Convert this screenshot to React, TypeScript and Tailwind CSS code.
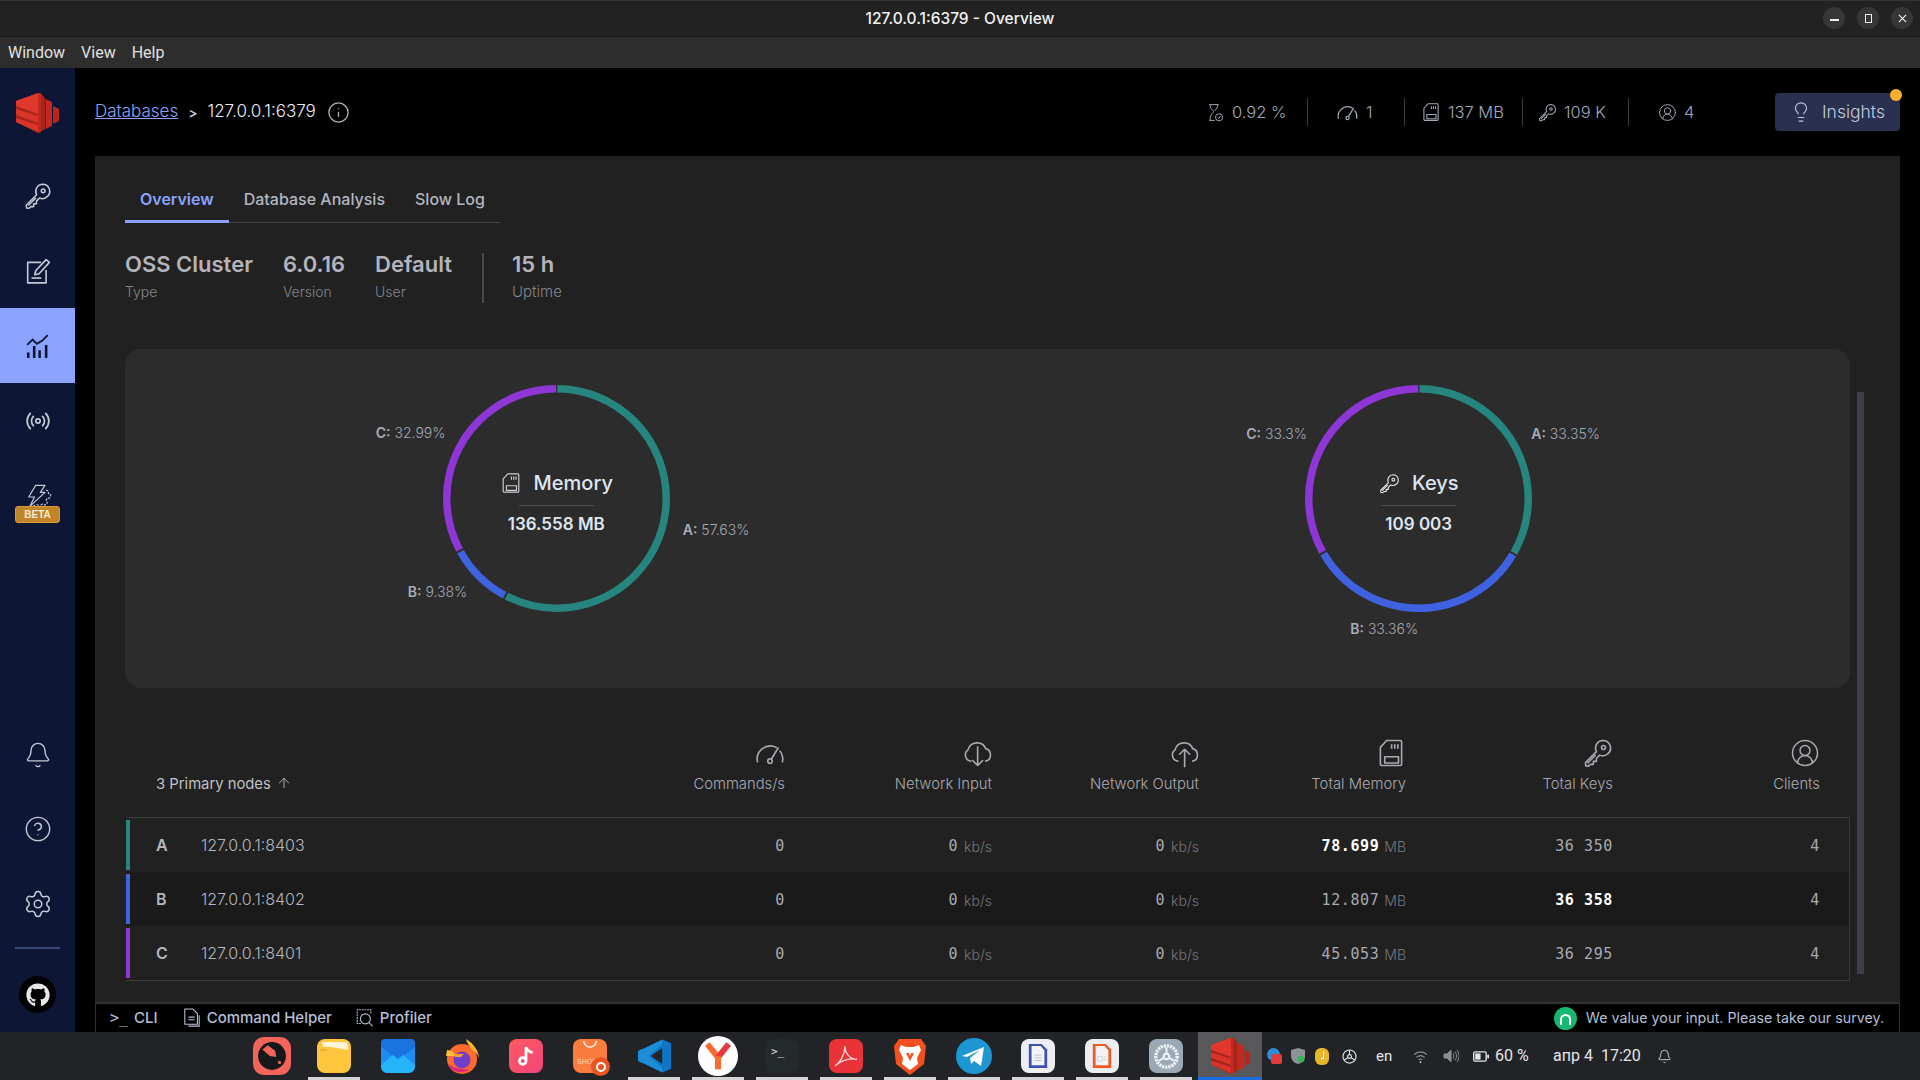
import { Bell, CircleHelp, CircleUserRound, Lightbulb, Radio, Settings, ArrowUp, Info } from 'lucide-react';
import { FaGithub } from 'react-icons/fa';

const inter = 'font-["Inter","Liberation_Sans",sans-serif]';

type IconProps = { className?: string };

const KeyIcon = ({ className }: IconProps) => (
  <svg viewBox="0 0 24 24" fill="none" stroke="currentColor" strokeWidth="1.3" strokeLinejoin="round" className={className}>
    <path d="M16 2a6 6 0 0 1 3.6 10.8 6 6 0 0 1-6.3.9l-2.6 2.7v2.3H8.3v2.4H6l-1.6 1.4-2.2-.2-.2-2.6 8.8-8.8A6 6 0 0 1 16 2z" />
    <circle cx="16.4" cy="7.6" r="1.6" />
    <path d="M3.6 20.2l6.6-6.6" />
  </svg>
);

const MemoryIcon = ({ className }: IconProps) => (
  <svg viewBox="0 0 24 24" fill="none" stroke="currentColor" strokeWidth="1.3" strokeLinejoin="round" className={className}>
    <path d="M8.5 2h11a1 1 0 0 1 1 1v18a1 1 0 0 1-1 1h-15a1 1 0 0 1-1-1V7.5z" />
    <path d="M7 15h11v5H7z" />
    <path d="M12.5 5v3.5M15 5v3.5M17.5 5v3.5" />
  </svg>
);

const GaugeIcon = ({ className }: IconProps) => (
  <svg viewBox="0 0 24 24" fill="none" stroke="currentColor" strokeWidth="1.3" strokeLinecap="round" className={className}>
    <path d="M2 19a10.5 10.5 0 0 1 15-11.5" />
    <path d="M20 10.5a10.5 10.5 0 0 1 2 8.5" />
    <circle cx="12" cy="18.5" r="1.8" />
    <path d="M13 17l5.5-9" />
  </svg>
);

const CloudIcon = ({ className, up }: IconProps & { up?: boolean }) => (
  <svg viewBox="0 0 24 24" fill="none" stroke="currentColor" strokeWidth="1.3" strokeLinecap="round" strokeLinejoin="round" className={className}>
    <path d="M7 18.5A5 5 0 0 1 4.8 9.5 7.5 7.5 0 0 1 19 8.5a5.2 5.2 0 0 1 0 10" />
    {up ? <path d="M12.5 23V9M8.5 13l4-4 4 4" /> : <path d="M12.5 7v15M8.5 18l4 4 4-4" />}
  </svg>
);

const HourglassIcon = ({ className }: IconProps) => (
  <svg viewBox="0 0 24 24" fill="none" stroke="currentColor" strokeWidth="1.2" strokeLinejoin="round" className={className}>
    <path d="M4 2h12M4 22h7M5 2c0 5 3 6 5 9-2 2-5 4-5 11M15 2c0 3-2 5-4 8" />
    <circle cx="16.5" cy="18" r="4.5" />
    <path d="M14.5 18l1.5 1.5 2.5-3" />
  </svg>
);

const AnalyticsIcon = ({ className }: IconProps) => (
  <svg viewBox="0 0 24 24" fill="none" stroke="currentColor" strokeWidth="1.7" className={className}>
    <path d="M2 11l5-5 4 4 5-3 5-5" />
    <path d="M3 18v5M8.5 12v11M13.5 16v7M19.5 11v12" strokeWidth="2.4" />
  </svg>
);

const EditorIcon = ({ className }: IconProps) => (
  <svg viewBox="0 0 24 24" fill="none" stroke="currentColor" strokeWidth="1.5" strokeLinejoin="round" className={className}>
    <path d="M15 4H2.5v19h17V11" />
    <path d="M9 15.5l1-4L19.5 1.5l3 2.5-9.5 10.5z" />
    <path d="M6 18.5h9" />
  </svg>
);

const TriggerIcon = ({ className }: IconProps) => (
  <svg viewBox="0 0 24 24" fill="none" stroke="currentColor" strokeWidth="1" strokeLinejoin="round" className={className}>
    <path d="M10 2h8l-4 6h4L5 20l4-8H4z" />
    <path d="M19 6l2 1v2l2 1-1 3-2 0-1 2 1 2-2 2-2-1-2 1M8 20a4 4 0 0 1 6 0" strokeDasharray="2 1" />
  </svg>
);

const RedisLogo = ({ className }: IconProps) => (
  <svg viewBox="0 0 44 40" className={className}>
    <path d="M0 8L22 0l3 .6L29 5v31l-7 4L0 29z" fill="#a5241b" />
    <path d="M0 8L22 0v21L0 13z" fill="#e0382d" />
    <path d="M0 16l22 7v7L0 22z" fill="#d9332a" />
    <path d="M0 25l22 7v7L0 29z" fill="#d9332a" />
    <path d="M22 0l3 .6V39l-3 1z" fill="#c22a20" />
    <path d="M29.500 6l6.500 3v24l-6.500 3z" fill="#c5281e" />
    <path d="M37 13l6 3v12l-6 3z" fill="#ba261c" />
  </svg>
);

const Stat = ({ icon, label, className }: { icon: React.ReactNode; label: string; className: string }) => (
  <div className={`flex items-center gap-[7px] text-[#a3a9b8] text-[16.500px] font-light ${className}`}>
    {icon}
    <span>{label}</span>
  </div>
);

const Divider = () => <div className="w-px h-[28px] bg-[#3c3c3c]" />;

const SideItem = ({ children, active }: { children: React.ReactNode; active?: boolean }) => (
  <div className={`relative h-[75px] flex items-center justify-center ${active ? 'bg-[#8ba2ff] text-[#0d1735]' : 'text-[#c3c9d6]'}`}>
    {children}
  </div>
);

const Donut = ({ parts }: { parts: { pct: number; color: string }[] }) => {
  const r = 109.75;
  const c = 2 * Math.PI * r;
  let acc = 0;
  return (
    <svg viewBox="0 0 227 227" className="w-[227px] h-[227px] -rotate-90">
      {parts.map((p) => {
        const len = (p.pct / 100) * c;
        const offset = -acc - 1;
        acc += len;
        return (
          <circle key={p.color} cx="113.5" cy="113.5" r={r} fill="none" stroke={p.color} strokeWidth="7.5"
            strokeDasharray={`${len - 2} ${c - len + 2}`} strokeDashoffset={offset} />
        );
      })}
    </svg>
  );
};

const ChartLabel = ({ name, value, className }: { name: string; value: string; className: string }) => (
  <div className={`absolute h-4 leading-4 text-[14px] whitespace-nowrap text-[#a4a8b4] font-light ${className}`}>
    <span className="font-semibold text-[#a9adb9]">{name}:</span> {value}
  </div>
);

const ChartCenter = ({ icon, title, value, gap }: { icon: React.ReactNode; title: string; value: string; gap: string }) => (
  <div className="absolute inset-0 flex flex-col items-center pt-[85px] text-[#dfe5ef]">
    <div className={`flex items-center h-[26px] ${gap}`}>
      {icon}
      <span className="text-[20px] font-medium">{title}</span>
    </div>
    <div className="w-[75px] h-px bg-[#4d4d4d] mt-[9px]" />
    <div className="text-[17px] font-semibold mt-[6px] leading-[24px]">{value}</div>
  </div>
);

const columns = [
  { label: 'Commands/s', icon: <GaugeIcon className="w-[30px] h-[30px]" /> },
  { label: 'Network Input', icon: <CloudIcon className="w-[30px] h-[30px]" /> },
  { label: 'Network Output', icon: <CloudIcon up className="w-[30px] h-[30px]" /> },
  { label: 'Total Memory', icon: <MemoryIcon className="w-[30px] h-[30px]" /> },
  { label: 'Total Keys', icon: <KeyIcon className="w-[30px] h-[30px]" /> },
  { label: 'Clients', icon: <CircleUserRound strokeWidth={1.2} className="w-[30px] h-[30px]" /> },
];

const rows = [
  { id: 'A', addr: '127.0.0.1:8403', bar: 'bg-[#26867f]', bg: '', mem: '78.699', memTop: true, keys: '36 350', keysTop: false },
  { id: 'B', addr: '127.0.0.1:8402', bar: 'bg-[#3f63e0]', bg: 'bg-[#1a1a1a]', mem: '12.807', memTop: false, keys: '36 358', keysTop: true },
  { id: 'C', addr: '127.0.0.1:8401', bar: 'bg-[#8e36d6]', bg: '', mem: '45.053', memTop: false, keys: '36 295', keysTop: false },
];

const mono = 'font-["DejaVu_Sans_Mono",monospace] text-[15px] tracking-[0.6px] text-[#a9a9b0]';
const cell = 'flex items-center justify-end pr-[30px] pt-[2px]';
const grid = 'grid grid-cols-[482px_repeat(6,207px)]';

const DockItem = ({ children, open, active }: { children: React.ReactNode; open?: boolean; active?: boolean }) => (
  <div className={`relative w-[64px] h-[48px] flex items-center justify-center ${active ? 'bg-[#59595c]' : ''}`}>
    {children}
    {open && <div className="absolute bottom-0 left-[6px] right-[6px] h-[3px] bg-[#d4d4d4]" />}
    {active && <div className="absolute bottom-0 left-0 right-0 h-[3px] bg-[#1a6de0]" />}
  </div>
);

const Dock = () => (
  <div className="flex pl-[238px]">
    <DockItem>
      <div className="w-[38px] h-[38px] rounded-[11px] bg-[#f2635a] flex items-center justify-center ml-[4px]">
        <svg viewBox="0 0 28 28" className="w-[30px] h-[30px]">
          <circle cx="14" cy="14" r="13" fill="#17181a" />
          <path d="M5 8l5-4 7 5 1 6-6-1z" fill="#f2635a" />
          <circle cx="21" cy="20" r="1.5" fill="#f2635a" />
        </svg>
      </div>
    </DockItem>
    <DockItem open>
      <svg viewBox="0 0 34 34" className="w-[34px] h-[34px]">
        <rect width="34" height="34" rx="8" fill="#ffc53d" />
        <path d="M5 3h22a4 4 0 0 1 4 4v4L14 8H6z" fill="#fff4d8" />
        <path d="M3 11h7" stroke="#e9a52a" strokeWidth="1.5" />
      </svg>
    </DockItem>
    <DockItem>
      <svg viewBox="0 0 34 34" className="w-[34px] h-[34px]">
        <rect width="34" height="34" rx="8" fill="#1d8df0" />
        <path d="M0 8l17 13L34 8V4a4 4 0 0 0-4-4H4a4 4 0 0 0-4 4z" fill="#1a74e0" />
        <path d="M0 26l12-10 5 4 5-4 12 10v2a6 6 0 0 1-6 6H6a6 6 0 0 1-6-6z" fill="#25b4fa" />
      </svg>
    </DockItem>
    <DockItem>
      <svg viewBox="0 0 36 36" className="w-[36px] h-[38px]">
        <circle cx="18" cy="21" r="15" fill="#ff6b2c" />
        <path d="M22 1c8 5 13 12 13 20 0-3-3-7-6-8-2-4-6-7-7-12z" fill="#ffb52c" />
        <path d="M3 12l5 1 4 5H2z" fill="#ffbf3a" />
        <path d="M4 26c3 8 14 11 22 5-6 1-14 0-22-5z" fill="#e0287a" />
        <circle cx="18" cy="22" r="8.5" fill="#6e3fc8" />
        <path d="M11 16h9l-3 3h-6z" fill="#ff9d2c" />
      </svg>
    </DockItem>
    <DockItem>
      <div className="w-[34px] h-[34px] rounded-[8px] bg-gradient-to-br from-[#ff5a5f] to-[#f0437a] flex items-center justify-center">
        <svg viewBox="0 0 20 20" className="w-[22px] h-[22px]" fill="none" stroke="#fff" strokeWidth="2.5">
          <circle cx="7" cy="14.5" r="3" />
          <path d="M10 14V2c1 3 3 4 6 5" />
        </svg>
      </div>
    </DockItem>
    <DockItem>
      <div className="relative w-[34px] h-[34px] rounded-[8px] bg-[#fb7d3d] flex flex-col items-center">
        <svg viewBox="0 0 20 10" className="w-[18px] h-[9px] mt-[2px]" fill="none" stroke="#fff" strokeWidth="1.5">
          <path d="M3 0c1 9 13 9 14 0" />
        </svg>
        <span className="text-[7px] leading-[9px] mt-[7px] mr-[6px] text-[#ffd9c4] font-['Liberation_Sans',sans-serif]">SHOP</span>
        <div className="absolute -right-[3px] -bottom-[3px] w-[19px] h-[19px] rounded-full bg-[#e95420] flex items-center justify-center">
          <div className="w-[10px] h-[10px] rounded-full border-2 border-white" />
        </div>
      </div>
    </DockItem>
    <DockItem open>
      <svg viewBox="0 0 36 36" className="w-[35px] h-[36px]">
        <path d="M26 1l9 4v26l-9 4-16-15z" fill="#0e76c8" />
        <path d="M26 10v16L14 18z" fill="#222326" />
        <path d="M1 13l3-2 22 19v5L1 23z" fill="#1a8ed8" />
        <path d="M1 23l3 2 22-19V1L1 13z" fill="#1a8ed8" />
      </svg>
    </DockItem>
    <DockItem open>
      <div className="w-[40px] h-[40px] rounded-full bg-white flex items-center justify-center">
        <svg viewBox="0 0 24 24" className="w-[32px] h-[32px]" fill="none" strokeWidth="4.5">
          <path d="M4 3l8 10" stroke="#fc6b2d" />
          <path d="M20 3l-8 10" stroke="#e8383d" />
          <path d="M12 12v10" stroke="#fc6b2d" />
        </svg>
      </div>
    </DockItem>
    <DockItem open>
      <div className="w-[34px] h-[34px] rounded-[8px] bg-[#242a2c] font-['DejaVu_Sans_Mono',monospace] text-[11px] leading-3 text-[#e5e5e5] pl-[6px] pt-[7px]">
        {'>_'}
      </div>
    </DockItem>
    <DockItem open>
      <div className="w-[34px] h-[34px] rounded-[8px] bg-[#ea3338] flex items-center justify-center">
        <svg viewBox="0 0 24 24" className="w-[26px] h-[26px]" fill="none" stroke="#f8d8d8" strokeWidth="1.2">
          <path d="M2 21c5-3 9-11 9-18 0 7 5 12 11 12-7-1-14 1-20 6z" />
        </svg>
      </div>
    </DockItem>
    <DockItem open>
      <svg viewBox="0 0 34 38" className="w-[34px] h-[38px]">
        <path d="M6 2h22l5 7-2 18-14 11L3 27 1 9z" fill="#f4511e" />
        <path d="M8 8l5 2h8l5-2 2 5-4 8 1 6-8 6-8-6 1-6-4-8z" fill="#fff" />
        <path d="M13 16h3l1 3 1-3h3l-4 8z" fill="#f4511e" />
      </svg>
    </DockItem>
    <DockItem open>
      <svg viewBox="0 0 36 36" className="w-[36px] h-[36px]">
        <circle cx="18" cy="18" r="18" fill="#1e96d2" />
        <path d="M6 18l22-9-3 19-7-5-3 3-1-6 10-8-13 7z" fill="#fff" />
      </svg>
    </DockItem>
    <DockItem open>
      <div className="w-[34px] h-[34px] rounded-[8px] bg-[#eceef2] flex items-center justify-center">
        <svg viewBox="0 0 24 28" className="w-[22px] h-[28px]">
          <path d="M2 1h14l6 6v20H2z" fill="#3f51b0" />
          <path d="M5 3h10l4 5v16H5z" fill="#f4f4f8" />
          <path d="M8 13h8M8 16h8M8 19h8" stroke="#b8bcc8" />
        </svg>
      </div>
    </DockItem>
    <DockItem open>
      <div className="w-[34px] h-[34px] rounded-[8px] bg-[#eceef2] flex items-center justify-center">
        <svg viewBox="0 0 24 28" className="w-[22px] h-[28px]">
          <path d="M2 1h14l6 6v20H2z" fill="#ee5a22" />
          <path d="M5 3h10l4 5v16H5z" fill="#f4f4f8" />
          <circle cx="10" cy="17" r="3" fill="none" stroke="#c8c8cc" />
          <path d="M14 18h3M14 15h2" stroke="#c8c8cc" />
        </svg>
      </div>
    </DockItem>
    <DockItem open>
      <div className="w-[34px] h-[34px] rounded-[8px] bg-[#9aa9b5] flex items-center justify-center">
        <svg viewBox="0 0 24 24" className="w-[27px] h-[27px]" fill="none" stroke="#f0f2f4" strokeWidth="1.8">
          <circle cx="12" cy="12" r="9.5" strokeDasharray="2 0.8" strokeWidth="3" />
          <circle cx="12" cy="12" r="2.5" />
          <path d="M12 4v5M5 16l5-3M19 16l-5-3" />
        </svg>
      </div>
    </DockItem>
    <DockItem active>
      <RedisLogo className="w-[40px] h-[38px] ml-[2px]" />
    </DockItem>
  </div>
);

const Tray = () => (
  <div className="flex-1 relative flex items-center text-[#e4e6ea] font-['Roboto',sans-serif] text-[16px]">
    <div className="relative w-[15px] h-[16px] ml-[5px]">
      <div className="w-[13px] h-[13px] rounded-full bg-[#2b8fd8]" />
      <div className="absolute right-0 bottom-0 w-[11px] h-[10px] rounded-[2px] bg-[#e23b3b]" />
    </div>
    <svg viewBox="0 0 14 16" className="w-[14px] h-[16px] ml-[9px]">
      <path d="M7 0l7 2v6c0 4-3 7-7 8-4-1-7-4-7-8V2z" fill="#8d9297" />
      <circle cx="10" cy="11" r="3.5" fill="#35b558" />
    </svg>
    <div className="w-[14px] h-[17px] ml-[10px] rounded-[6px] bg-[#e6b72d] flex justify-center pt-[3px]">
      <div className="w-[3px] h-[8px] border-r border-b border-white" />
    </div>
    <svg viewBox="0 0 16 16" className="w-[15px] h-[15px] ml-[13px]" fill="none" stroke="#e4e6ea" strokeWidth="1.2">
      <circle cx="8" cy="8" r="7" />
      <circle cx="8" cy="8" r="2" />
      <path d="M8 1v5M2 12l4.5-3M14 12L9.5 9" />
    </svg>
    <span className="ml-[19px] w-[16px] text-[15px]">en</span>
    <svg viewBox="0 0 16 14" className="w-[15px] h-[13px] ml-[21px]" fill="none" stroke="#8b8e92" strokeWidth="1.2">
      <path d="M1 5c4-4 10-4 14 0M3.5 8c3-2.5 6-2.5 9 0M6 10.5c1.300-1 2.700-1 4 0" />
      <circle cx="8" cy="13" r="1" fill="#e4e6ea" stroke="none" />
    </svg>
    <svg viewBox="0 0 16 14" className="w-[16px] h-[14px] ml-[15px]" fill="none" stroke="#8b8e92" strokeWidth="1">
      <path d="M1 5h3l4-4v12l-4-4H1z" fill="#8b8e92" />
      <path d="M10 4c1 2 1 4 0 6M12 2.500c2 3 2 6 0 9M14 1c2.500 4 2.500 8 0 12" />
    </svg>
    <svg viewBox="0 0 18 12" className="w-[16px] h-[11px] ml-[14px]">
      <rect x="0.800" y="0.800" width="14" height="10.400" rx="1.500" fill="none" stroke="#e4e6ea" strokeWidth="1.500" />
      <rect x="2.500" y="2.500" width="6" height="7" fill="#e4e6ea" />
      <rect x="16" y="4" width="2" height="4" fill="#e4e6ea" />
    </svg>
    <span className="ml-[6px] w-[58px]">60 %</span>
    <span className="w-[48px]">апр 4</span>
    <span className="w-[56px]">17:20</span>
    <Bell strokeWidth={1.3} className="w-[15px] h-[17px]" />
  </div>
);

export default function App() {
  return (
    <div className={`w-[1920px] h-[1080px] flex flex-col overflow-hidden bg-black ${inter}`}>
      <div className="relative h-[37px] bg-[#222222] border-t border-[#333] border-b border-b-[#191919] flex items-center justify-center">
        <span className="text-[15.500px] font-medium text-[#f2f2f2]">127.0.0.1:6379 - Overview</span>
        <div className="absolute right-[7px] top-[6px] flex gap-[12px]">
          <div className="w-[22px] h-[22px] rounded-full bg-[#363636] flex items-center justify-center pt-[3px]">
            <div className="w-[9px] h-[2px] bg-[#eee]" />
          </div>
          <div className="w-[22px] h-[22px] rounded-full bg-[#363636] flex items-center justify-center">
            <div className="w-[7px] h-[9px] border border-[#eee]" />
          </div>
          <div className="w-[22px] h-[22px] rounded-full bg-[#363636] flex items-center justify-center">
            <svg viewBox="0 0 10 10" className="w-[9px] h-[9px]" stroke="#eee" strokeWidth="1.3">
              <path d="M1 1l8 8M9 1l-8 8" />
            </svg>
          </div>
        </div>
      </div>

      <div className="h-[31px] bg-[#2d2d2d] flex items-center pl-[8px] gap-[16px] text-[16px] text-[#e0e0e0] font-['Roboto',sans-serif]">
        <span>Window</span>
        <span>View</span>
        <span>Help</span>
      </div>

      <div className="flex-1 flex min-h-0">
        <aside className="w-[75px] bg-[#0d1735] flex flex-col">
          <div className="h-[90px] flex items-center justify-center">
            <RedisLogo className="w-[44px] h-[40px]" />
          </div>
          <SideItem><KeyIcon className="w-[28px] h-[28px]" /></SideItem>
          <SideItem><EditorIcon className="w-[26px] h-[26px]" /></SideItem>
          <SideItem active><AnalyticsIcon className="w-[26px] h-[26px]" /></SideItem>
          <SideItem><Radio strokeWidth={1.6} className="w-[26px] h-[26px]" /></SideItem>
          <SideItem>
            <TriggerIcon className="w-[28px] h-[28px] mt-[2px]" />
            <span className="absolute left-[15px] top-[48px] w-[45px] h-[17px] rounded-[3px] bg-[#c28428] border border-[#dc9a35] text-[10px] leading-[15px] font-semibold text-center text-[#f5ead6] font-['Liberation_Sans',sans-serif]">
              BETA
            </span>
          </SideItem>
          <div className="flex-1" />
          <SideItem><Bell strokeWidth={1.2} className="w-[28px] h-[28px] mt-[4px]" /></SideItem>
          <SideItem><CircleHelp strokeWidth={1.2} className="w-[28px] h-[28px] mt-[2px]" /></SideItem>
          <SideItem><Settings strokeWidth={1.2} className="w-[30px] h-[30px] mt-[2px]" /></SideItem>
          <div className="mx-[15px] mt-[7px] h-[2px] bg-[#3a4a78]" />
          <div className="mt-[27px] mb-[19px] mx-auto w-[37px] h-[37px] rounded-full bg-black flex items-center justify-center">
            <FaGithub className="w-[24px] h-[24px] text-[#e8e8e8]" />
          </div>
        </aside>

        <main className="flex-1 min-w-0 flex flex-col">
          <header className="relative h-[88px] flex items-center pl-[20px] pr-[20px] text-[17px]">
            <a className="text-[#8ba2ff] underline font-light">Databases</a>
            <span className="ml-[10px] text-[#dfe5ef] text-[14px]">&gt;</span>
            <span className="ml-[10px] text-[#eef0f5] font-light">127.0.0.1:6379</span>
            <Info strokeWidth={1.4} className="ml-[11px] w-[23px] h-[23px] text-[#b0b0b0]" />
            <div className="ml-auto flex items-center">
              <Stat className="w-[101px]" icon={<HourglassIcon className="w-[19px] h-[19px]" />} label="0.92 %" />
              <Divider />
              <Stat className="w-[96px] pl-[28px]" icon={<GaugeIcon className="w-[23px] h-[22px]" />} label="1" />
              <Divider />
              <Stat className="w-[117px] pl-[16px]" icon={<MemoryIcon className="w-[20px] h-[20px]" />} label="137 MB" />
              <Divider />
              <Stat className="w-[105px] pl-[15px]" icon={<KeyIcon className="w-[19px] h-[19px]" />} label="109 K" />
              <Divider />
              <Stat className="w-[146px] pl-[29px]" icon={<CircleUserRound strokeWidth={1.2} className="w-[19px] h-[19px]" />} label="4" />
              <button className="relative w-[125px] h-[38px] rounded-[4px] bg-[#2a3050] flex items-center pl-[15px] gap-[10px] text-[#c3cbdc] text-[17.500px] font-light">
                <Lightbulb strokeWidth={1.2} className="w-[22px] h-[22px]" />
                Insights
                <span className="absolute -right-[2px] -top-[4px] w-[12px] h-[12px] rounded-full bg-[#ffaf2b]" />
              </button>
            </div>
          </header>

          <section className="relative flex-1 min-h-0 mx-[20px] bg-[#212121] pl-[30px] pr-[50px]">
            <div className="flex w-[375px] h-[67px] items-end border-b border-[#444]">
              <div className="px-[15px] h-[39px] -mb-px border-b-[3px] border-[#8ba2ff] text-[#8ba2ff] font-semibold text-[16px] leading-[30px]">
                Overview
              </div>
              <div className="px-[15px] h-[39px] text-[#b4b6c0] font-medium text-[16px] leading-[32px]">Database Analysis</div>
              <div className="px-[15px] h-[39px] text-[#b4b6c0] font-medium text-[16px] leading-[32px]">Slow Log</div>
            </div>

            <div className="flex gap-[30px] mt-[30px] mb-[46px] h-[50px]">
              {[
                ['OSS Cluster', 'Type'],
                ['6.0.16', 'Version'],
                ['Default', 'User'],
              ].map(([v, l]) => (
                <div key={l}>
                  <div className="text-[22px] leading-[22px] font-semibold text-[#b4b4bc]">{v}</div>
                  <div className="text-[14px] leading-[20px] mt-[7px] font-light text-[#85858c]">{l}</div>
                </div>
              ))}
              <div className="w-[2px] bg-[#4a4a4a]" />
              <div className="-ml-[2px]">
                <div className="text-[22px] leading-[22px] font-semibold text-[#b4b4bc]">15 h</div>
                <div className="text-[15px] leading-[20px] mt-[7px] font-light text-[#85858c]">Uptime</div>
              </div>
            </div>

            <div className="grid grid-cols-2 h-[339px] rounded-[16px] bg-[#2c2c2c] pt-[36px]">
              <div className="relative w-[227px] h-[227px] justify-self-center">
                <Donut parts={[{ pct: 57.63, color: '#26867f' }, { pct: 9.38, color: '#3f63e0' }, { pct: 32.99, color: '#8e36d6' }]} />
                <ChartLabel name="C" value="32.99%" className="left-[-67px] top-[40px]" />
                <ChartLabel name="A" value="57.63%" className="left-[240px] top-[137px]" />
                <ChartLabel name="B" value="9.38%" className="left-[-35px] top-[199px]" />
                <ChartCenter icon={<MemoryIcon className="w-[22px] h-[22px] text-[#c8ccd4]" />} title="Memory" value="136.558 MB" gap="gap-[12px]" />
              </div>
              <div className="relative w-[227px] h-[227px] justify-self-center">
                <Donut parts={[{ pct: 33.35, color: '#26867f' }, { pct: 33.36, color: '#3f63e0' }, { pct: 33.3, color: '#8e36d6' }]} />
                <ChartLabel name="C" value="33.3%" className="left-[-59px] top-[41px]" />
                <ChartLabel name="A" value="33.35%" className="left-[226px] top-[41px]" />
                <ChartLabel name="B" value="33.36%" className="left-[45px] top-[236px]" />
                <ChartCenter icon={<KeyIcon className="w-[21px] h-[21px] text-[#e0e4ea]" />} title="Keys" value="109 003" gap="gap-[12px]" />
              </div>
            </div>

            <div className="ml-px">
              <div className={`${grid} h-[130px] border-b border-[#3c3c3c] text-[14.800px] text-[#a9a9b2] font-light`}>
                <div className="flex items-end pb-[23px] pl-[30px] text-[#c0c0c8] font-normal leading-5">
                  3 Primary nodes
                  <ArrowUp strokeWidth={1.3} className="ml-[5px] mb-[3px] w-[16px] h-[16px]" />
                </div>
                {columns.map((c) => (
                  <div key={c.label} className="flex flex-col items-end pt-[50px] pr-[30px]">
                    {c.icon}
                    <span className="mt-[6px] leading-5 whitespace-nowrap">{c.label}</span>
                  </div>
                ))}
              </div>
              <div className="border-b border-r border-[#3a3a3a]">
                {rows.map((r) => (
                  <div key={r.id} className={`${grid} relative h-[54px] ${r.bg}`}>
                    <div className={`absolute left-0 top-[2px] bottom-[2px] w-[4px] ${r.bar}`} />
                    <div className="flex items-center pl-[30px] text-[#b5b5bd] text-[16px] font-light">
                      <span className="w-[45px] font-semibold text-[16px]">{r.id}</span>
                      {r.addr}
                    </div>
                    <div className={`${cell} ${mono}`}>0</div>
                    <div className={`${cell} ${mono} gap-[6px]`}>
                      0 <span className={`${inter} text-[14px] text-[#75757c] font-light tracking-normal`}>kb/s</span>
                    </div>
                    <div className={`${cell} ${mono} gap-[6px]`}>
                      0 <span className={`${inter} text-[14px] text-[#75757c] font-light tracking-normal`}>kb/s</span>
                    </div>
                    <div className={`${cell} ${mono} gap-[5px]`}>
                      <span className={r.memTop ? 'font-bold text-white' : ''}>{r.mem}</span>
                      <span className={`${inter} text-[14px] text-[#75757c] font-light tracking-normal`}>MB</span>
                    </div>
                    <div className={`${cell} ${mono} whitespace-pre ${r.keysTop ? 'font-bold text-white' : ''}`}>{r.keys}</div>
                    <div className={`${cell} ${mono}`}>4</div>
                  </div>
                ))}
              </div>
            </div>

            <div className="absolute left-[1762px] top-[236px] w-[7px] h-[582px] bg-[#3f3f4a]" />
          </section>

          <footer className="h-[30px] mx-[20px] bg-black border-t-2 border-x border-[#333] flex items-center text-[15px] text-[#b5bfd4] font-medium">
            <span className="ml-[14px] font-['DejaVu_Sans_Mono',monospace] font-normal text-[15px] mr-[6px]">&gt;_</span>
            CLI
            <svg viewBox="0 0 20 22" className="ml-[25px] mr-[6px] w-[18px] h-[20px]" fill="none" stroke="currentColor" strokeWidth="1.2">
              <path d="M2 1h9l5 5v12H2zM18 8v12H6" />
              <path d="M6 10h7M6 13h7" />
            </svg>
            Command Helper
            <svg viewBox="0 0 20 22" className="ml-[23px] mr-[6px] w-[19px] h-[20px]" fill="none" stroke="currentColor" strokeWidth="1.2">
              <path d="M6 17H2V2h15v4" strokeDasharray="2 1" />
              <circle cx="11" cy="12" r="5.500" />
              <path d="M15 16l4 4" />
            </svg>
            Profiler
            <div className="ml-auto mr-[15px] flex items-center gap-[9px] font-normal text-[14.250px]">
              <div className="w-[23px] h-[23px] rounded-full bg-[#14b871] flex items-end justify-center overflow-hidden pb-[5px]">
                <div className="w-[11px] h-[11px] rounded-t-full border-2 border-b-0 border-white" />
              </div>
              We value your input. Please take our survey.
            </div>
          </footer>
        </main>
      </div>

      <div className="h-[48px] bg-[#222326] flex">
        <Dock />
        <Tray />
      </div>
    </div>
  );
}
